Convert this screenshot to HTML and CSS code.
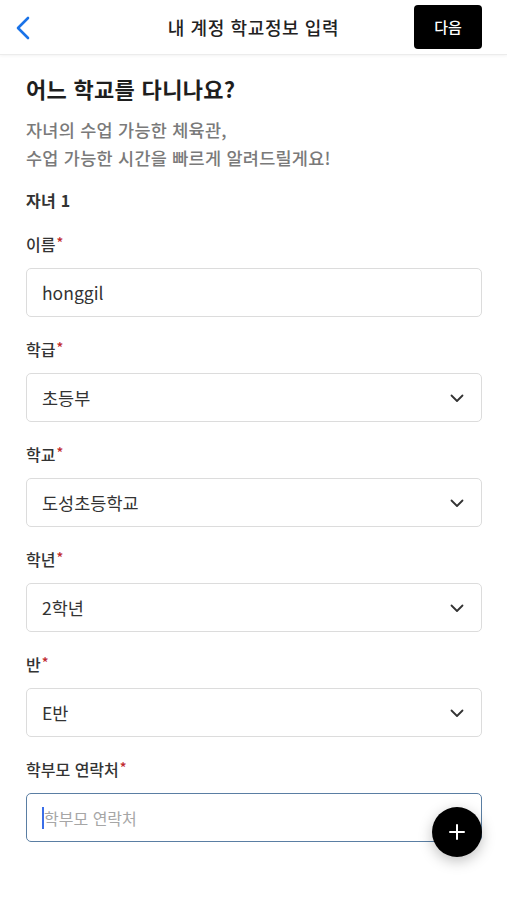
FILE: index.html
```html
<!DOCTYPE html>
<html lang="ko">
<head>
<meta charset="utf-8">
<title>내 계정 학교정보 입력</title>
<link rel="stylesheet" href="styles.css">
</head>
<body>
<header class="topbar">
  <button class="back" aria-label="뒤로">
    <svg width="16" height="24" viewBox="0 0 16 24"><path d="M13 2 L3 12 L13 22" fill="none" stroke="#1a73e8" stroke-width="2.6" stroke-linecap="round" stroke-linejoin="round"/></svg>
  </button>
  <h1 class="title">내 계정 학교정보 입력</h1>
  <button class="next">다음</button>
</header>
<main class="content">
  <h2 class="heading">어느 학교를 다니나요?</h2>
  <p class="sub">자녀의 수업 가능한 체육관,<br>수업 가능한 시간을 빠르게 알려드릴게요!</p>
  <div class="child">자녀 1</div>

  <div class="field">
    <div class="label">이름<span class="req">*</span></div>
    <div class="box"><span class="val">honggil</span></div>
  </div>
  <div class="field">
    <div class="label">학급<span class="req">*</span></div>
    <div class="box"><span class="val">초등부</span><svg class="chev" width="14" height="9" viewBox="0 0 14 9"><path d="M1.5 1.5 L7 7 L12.5 1.5" fill="none" stroke="#333" stroke-width="1.8" stroke-linecap="round" stroke-linejoin="round"/></svg></div>
  </div>
  <div class="field">
    <div class="label">학교<span class="req">*</span></div>
    <div class="box"><span class="val">도성초등학교</span><svg class="chev" width="14" height="9" viewBox="0 0 14 9"><path d="M1.5 1.5 L7 7 L12.5 1.5" fill="none" stroke="#333" stroke-width="1.8" stroke-linecap="round" stroke-linejoin="round"/></svg></div>
  </div>
  <div class="field">
    <div class="label">학년<span class="req">*</span></div>
    <div class="box"><span class="val">2학년</span><svg class="chev" width="14" height="9" viewBox="0 0 14 9"><path d="M1.5 1.5 L7 7 L12.5 1.5" fill="none" stroke="#333" stroke-width="1.8" stroke-linecap="round" stroke-linejoin="round"/></svg></div>
  </div>
  <div class="field">
    <div class="label">반<span class="req">*</span></div>
    <div class="box"><span class="val">E반</span><svg class="chev" width="14" height="9" viewBox="0 0 14 9"><path d="M1.5 1.5 L7 7 L12.5 1.5" fill="none" stroke="#333" stroke-width="1.8" stroke-linecap="round" stroke-linejoin="round"/></svg></div>
  </div>
  <div class="field">
    <div class="label">학부모 연락처<span class="req">*</span></div>
    <div class="box focus"><span class="caret"></span><span class="ph">학부모 연락처</span></div>
  </div>
</main>
<button class="fab" aria-label="추가">
  <svg width="20" height="20" viewBox="0 0 20 20"><path d="M10 3 V17 M3 10 H17" stroke="#fff" stroke-width="2" stroke-linecap="round"/></svg>
</button>
</body>
</html>
```
FILE: styles.css
```css
* { box-sizing: border-box; }
html, body { margin: 0; padding: 0; background: #fff; }
body {
  font-family: "Noto Sans CJK KR", "Noto Sans", sans-serif;
  color: #222;
  width: 507px;
  height: 900px;
  overflow: hidden;
  position: relative;
}
button { font-family: inherit; border: 0; background: none; padding: 0; cursor: pointer; }

.topbar {
  height: 55px;
  display: flex;
  align-items: center;
  justify-content: space-between;
  padding: 0 25px 0 15px;
  border-bottom: 1px solid #ececec;
  box-shadow: 0 1px 3px rgba(0,0,0,0.05);
  position: relative;
}
.back { width: 20px; height: 26px; display: flex; align-items: center; margin-top: 1px; }
.title {
  position: absolute;
  left: 0; right: 0;
  text-align: center;
  margin: 0;
  font-size: 18px;
  font-weight: 500;
  color: #222;
  letter-spacing: 0.6px;
  pointer-events: none;
}
.next {
  width: 68px; height: 44px;
  background: #000;
  color: #fff;
  border-radius: 4px;
  font-size: 15px;
  font-weight: 500;
  margin-top: -1px;
  position: relative;
}

.content { padding: 18px 25px 0 26px; }
.heading {
  margin: 0;
  font-size: 22px;
  font-weight: 700;
  line-height: 30px;
  color: #1e1e1e;
  letter-spacing: 0.3px;
}
.sub {
  margin: 13px 0 0;
  font-size: 17.5px;
  font-weight: 500;
  line-height: 28px;
  color: #7a7a7a;
  letter-spacing: 0.25px;
}
.child {
  margin-top: 16px;
  font-size: 16px;
  font-weight: 700;
  line-height: 24px;
  color: #333;
  letter-spacing: 0.3px;
}
.field { margin-top: 20px; }
.field + .field { margin-top: 20px; }
.label {
  font-size: 16px;
  font-weight: 500;
  line-height: 24px;
  height: 24px;
  color: #333;
}
.req { color: #c0282d; font-size: 14px; position: relative; top: -3px; margin-left: 1px; }
.box {
  margin-top: 12px;
  height: 49px;
  border: 1px solid #dcdcdc;
  border-radius: 5px;
  display: flex;
  align-items: center;
  justify-content: space-between;
  padding: 0 17px 0 15px;
}
.val { font-size: 17.5px; color: #333; }
.chev { display: block; margin-top: 1px; }
.box.focus {
  border-color: #5a7ea3;
  justify-content: flex-start;
}
.caret { width: 2px; height: 22px; background: #3b6ee8; margin-right: 0; }
.ph { font-size: 16px; color: #a6a6a6; }

.fab {
  position: absolute;
  left: 432px; top: 807px;
  width: 50px; height: 50px;
  border-radius: 50%;
  background: #000;
  display: flex; align-items: center; justify-content: center;
  box-shadow: 0 4px 14px rgba(0,0,0,0.25);
}
```
